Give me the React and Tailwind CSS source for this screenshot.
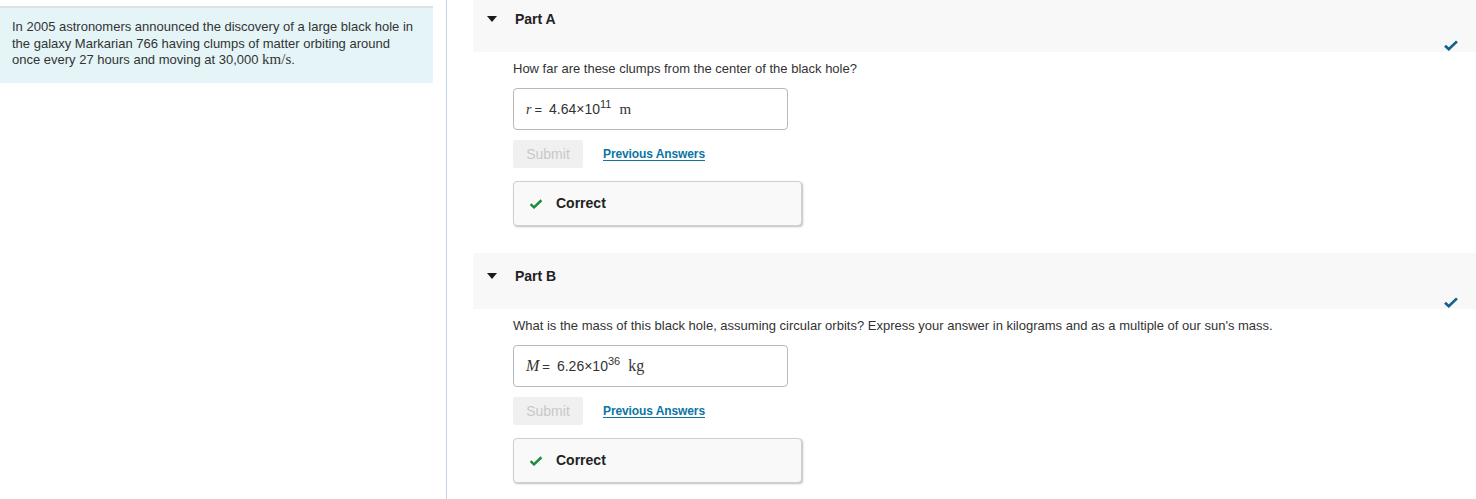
import React from "react";

const sans = { fontFamily: '"Liberation Sans", Arial, sans-serif' };
const serif = { fontFamily: '"Liberation Serif", "Times New Roman", serif' };

function Check({ className, color }) {
  return (
    <svg className={className} viewBox="0 0 16 12" fill="none">
      <path d="M1.5 6.2 L5.6 10 L14.5 1.5" stroke={color} strokeWidth="3" strokeLinecap="butt" strokeLinejoin="miter" />
    </svg>
  );
}

function PartHeader({ title, first }) {
  return (
    <div className={`relative h-[56px] bg-[#f8f8f8] ${first ? "-mt-[4px]" : "mt-[27px]"}`}>
      <div className="flex items-center pt-[15px] h-[31px]">
        <svg className="ml-[14px] w-[10px] h-[6px]" viewBox="0 0 10 6">
          <path d="M0 0 L10 0 L5 6 Z" fill="#1a1a1a" />
        </svg>
        <span className="ml-[18px] text-[14px] font-bold text-[#222] leading-4">{title}</span>
      </div>
      <Check className="absolute right-[17px] bottom-[1px] w-[16px] h-[11px]" color="#12628c" />
    </div>
  );
}

function Part({ title, first, question, answer }) {
  return (
    <div>
      <PartHeader title={title} first={first} />
      <div className="pl-[40px]">
        <p className="mt-[9px] text-[13px] leading-4 text-[#333]">{question}</p>
        <div className="mt-[11px] w-[275px] h-[42px] border border-[#b9b9b9] rounded-[4px] flex items-center pl-[12px] text-[#333]">
          {answer}
        </div>
        <div className="mt-[10px] flex items-center">
          <div className="w-[70px] h-[28px] bg-[#f0f0f0] rounded-[2px] flex items-center justify-center text-[14px] text-[#c8c8c8]">
            Submit
          </div>
          <a className="ml-[20px] text-[12px] font-bold text-[#0a76a3] underline underline-offset-2 leading-4 tracking-[-0.1px]">
            Previous Answers
          </a>
        </div>
        <div className="mt-[13px] w-[289px] h-[45px] bg-[#f9f9f9] border border-[#cfcfcf] rounded-[4px] shadow-[1px_1px_2px_rgba(0,0,0,0.25)] flex items-center">
          <Check className="ml-[15px] w-[14px] h-[10px]" color="#1e8a3c" />
          <span className="ml-[13px] text-[14px] font-bold text-[#222]">Correct</span>
        </div>
      </div>
    </div>
  );
}

function Answer({ v, mant, exp, unit, big }) {
  return (
    <div className="text-[14px] leading-5 whitespace-nowrap">
      <span style={serif} className={`italic ${big ? "text-[16px]" : "text-[14px]"}`}>{v}</span>
      <span className="ml-[3px] text-[13px]">=</span>
      <span className="ml-[7px]">{mant}</span>
      <span className="relative -top-[6px] text-[11px] leading-none">{exp}</span>
      <span style={serif} className={`ml-[8px] ${big ? "text-[16px]" : "text-[15px]"}`}>{unit}</span>
    </div>
  );
}

export default function App() {
  return (
    <div className="flex h-[499px] overflow-hidden bg-white" style={sans}>
      <div className="w-[446px] pt-[6px] shrink-0">
        <div className="w-[433px] border-t-2 border-[#dde2e6] bg-[#e5f5f7] pl-[12px] pr-[14px] pt-[11px] pb-[14px]">
          <p className="text-[13px] leading-[16.5px] text-[#333]">
            In 2005 astronomers announced the discovery of a large black hole in the galaxy Markarian 766 having clumps of matter orbiting around once every 27 hours and moving at 30,000{" "}
            <span style={serif} className="text-[15px] leading-none">km/s</span>.
          </p>
        </div>
      </div>
      <div className="w-px bg-[#c4d2e2] shrink-0" />
      <div className="flex-1 pl-[26px]">
        <Part
          first
          title="Part A"
          question="How far are these clumps from the center of the black hole?"
          answer={<Answer v="r" mant="4.64×10" exp="11" unit="m" />}
        />
        <Part
          title="Part B"
          question="What is the mass of this black hole, assuming circular orbits? Express your answer in kilograms and as a multiple of our sun's mass."
          answer={<Answer v="M" mant="6.26×10" exp="36" unit="kg" big />}
        />
      </div>
    </div>
  );
}
